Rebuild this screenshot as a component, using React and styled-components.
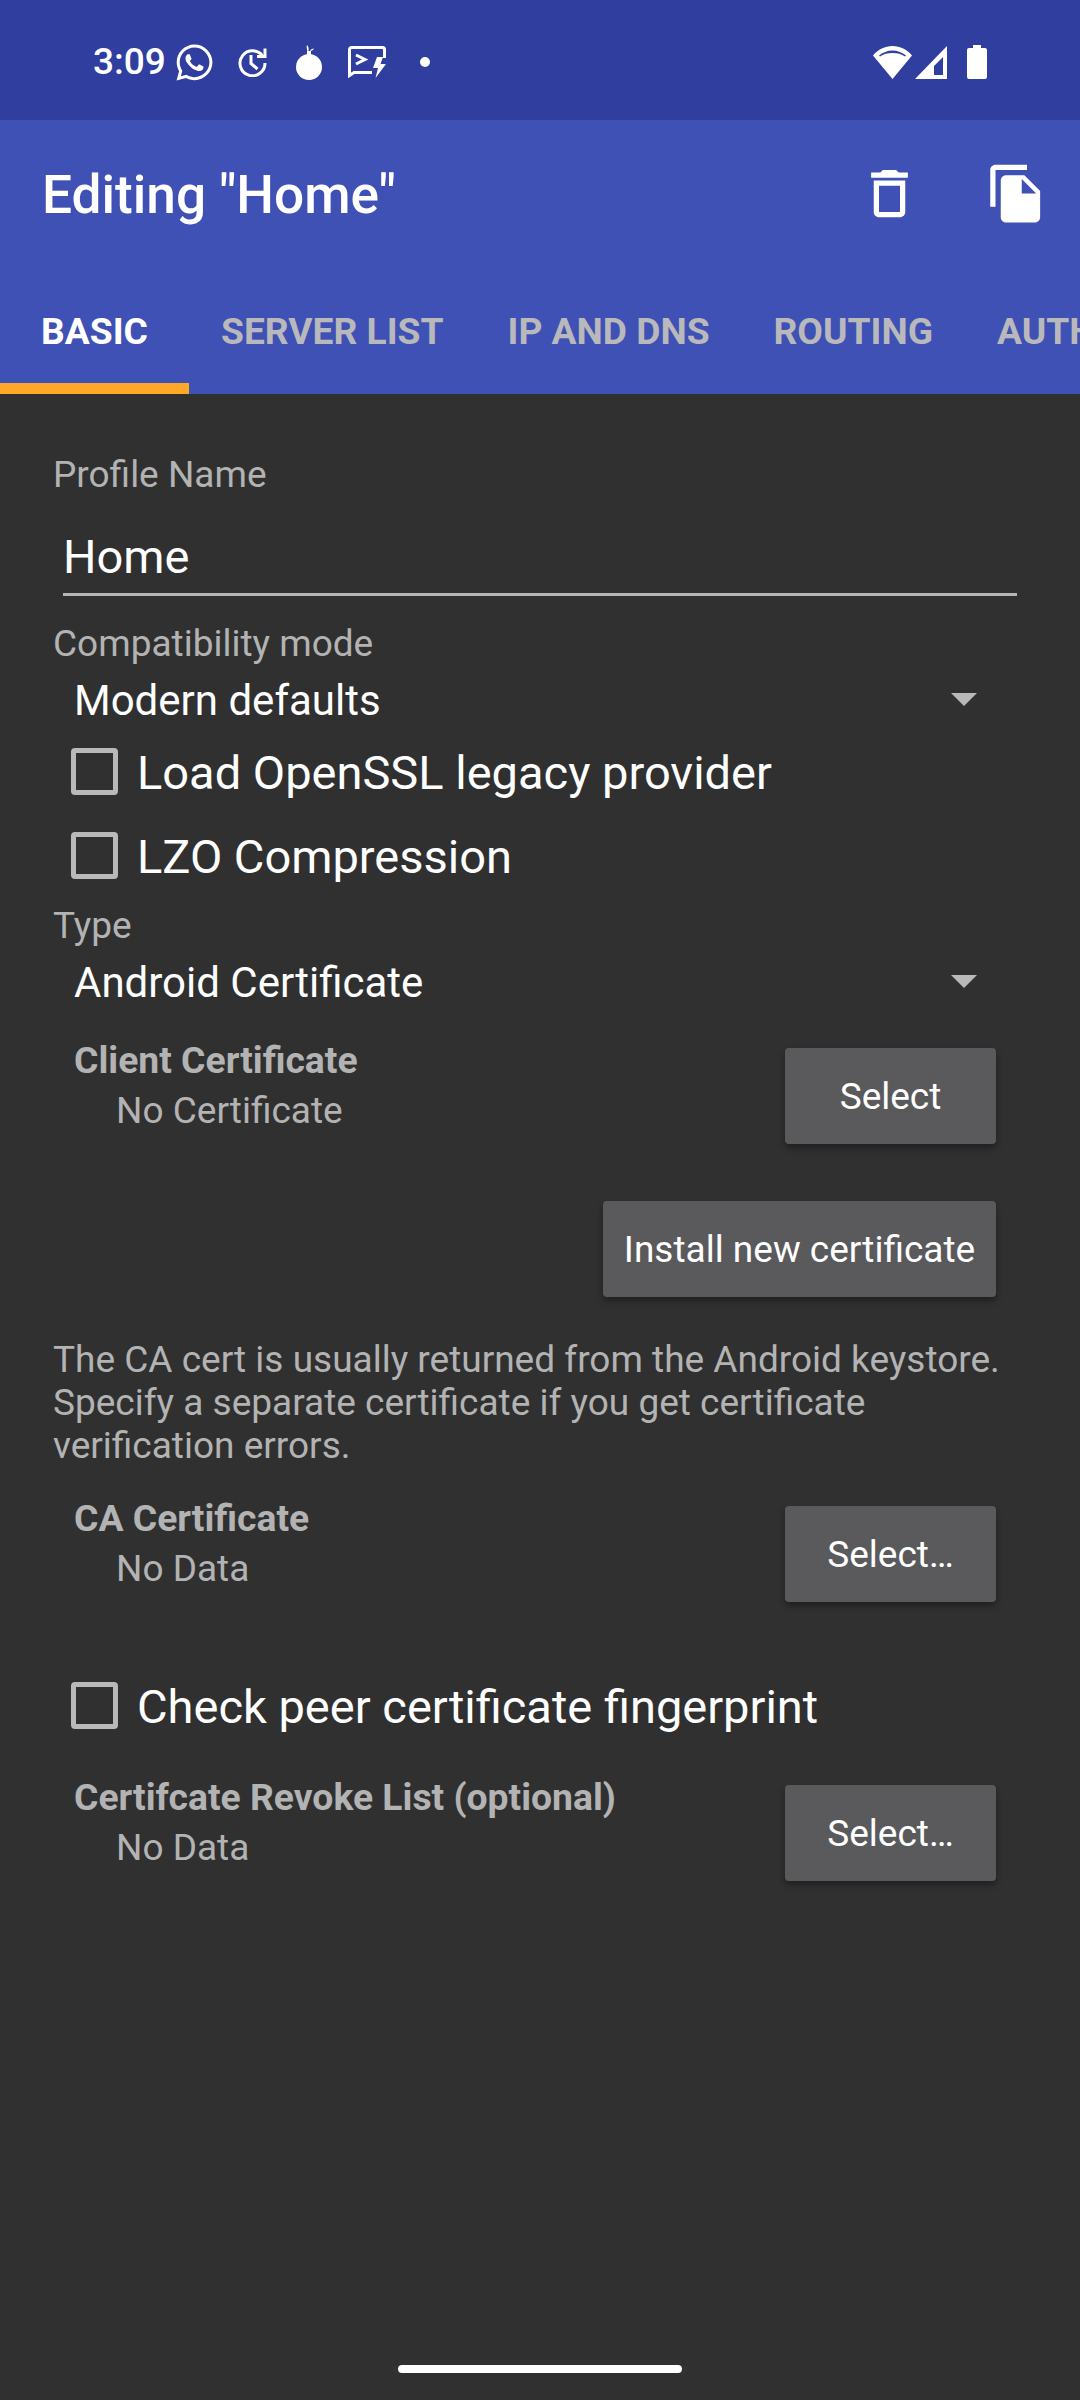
import React from 'react';
import styled, { createGlobalStyle } from 'styled-components';
import { FaWhatsapp } from 'react-icons/fa';

const GlobalStyle = createGlobalStyle`
  html, body {
    margin: 0;
    padding: 0;
    background: #303030;
  }
  * {
    box-sizing: border-box;
  }
`;

const Page = styled.div`
  width: 1080px;
  height: 2400px;
  overflow: hidden;
  display: flex;
  flex-direction: column;
  background: #303030;
  font-family: Roboto, "Liberation Sans", sans-serif;
  color: #fff;
  position: relative;
`;

const StatusBar = styled.div`
  height: 120px;
  flex: none;
  display: flex;
  align-items: center;
  padding: 4px 0 0 93px;
  background: #303f9f;
`;

const Clock = styled.span`
  font-size: 37px;
  font-weight: 500;
  width: 80.5px;
  margin-top: -2px;
`;

const StatusIcon = styled.svg`
  flex: none;
  margin-left: ${p => p.$ml || 0}px;
  fill: #fff;
`;

const Toolbar = styled.div`
  height: 147px;
  flex: none;
  display: flex;
  align-items: center;
  padding-left: 42px;
  background: #3f51b5;
`;

const Title = styled.div`
  font-size: 53.2px;
  font-weight: 500;
  flex: 1;
  padding-top: 2px;
`;

const ActionIcon = styled.svg`
  flex: none;
  width: 63px;
  height: 63px;
  fill: #fff;
  margin-right: ${p => p.$mr}px;
`;

const Tabs = styled.div`
  height: 127px;
  flex: none;
  display: flex;
  background: #3f51b5;
  overflow: hidden;
`;

const Tab = styled.div`
  flex: none;
  min-width: ${p => (p.$active ? '189px' : '0')};
  padding: 12px 32px 0;
  display: flex;
  align-items: center;
  justify-content: center;
  font-size: 37.2px;
  font-weight: 700;
  color: ${p => (p.$active ? '#fff' : '#b9b9bc')};
  border-bottom: 11px solid ${p => (p.$active ? '#ffa726' : 'transparent')};
`;

const Content = styled.div`
  flex: 1;
  padding: 0 63px 0 53px;
  display: flex;
  flex-direction: column;
`;

const Label = styled.div`
  font-size: 37px;
  line-height: 44px;
  color: #b3b3b3;
  margin-top: ${p => p.$mt || 0}px;
`;

const NameField = styled.div`
  margin: 30px 0 0 10px;
  height: 69px;
  font-size: 47px;
  line-height: 60px;
  border-bottom: 3px solid #b5b5b5;
`;

const Dropdown = styled.div`
  display: flex;
  align-items: center;
  justify-content: space-between;
  height: 56px;
  margin: 6px 21px 0 21px;
  padding-right: 19px;
  font-size: 42px;
`;

const Caret = styled.span`
  width: 0;
  height: 0;
  margin-top: -2px;
  border-left: 13px solid transparent;
  border-right: 13px solid transparent;
  border-top: 13px solid #b9b9b9;
`;

const CheckRow = styled.div`
  display: flex;
  align-items: center;
  height: 84px;
  margin-left: 18px;
  margin-top: ${p => p.$mt || 0}px;
  font-size: 47px;
`;

const Box = styled.span`
  flex: none;
  width: 47px;
  height: 47px;
  margin: -2px 19px 0 0;
  border: 5px solid #b9b9b9;
  border-radius: 4px;
`;

const CertRow = styled.div`
  display: flex;
  justify-content: space-between;
  align-items: flex-start;
  margin: ${p => p.$mt || 0}px 21px 0 0;
`;

const CertText = styled.div`
  margin-top: -10px;
  padding-left: 21px;
`;

const CertTitle = styled.div`
  font-size: 37.3px;
  line-height: 44px;
  font-weight: 700;
  color: #b3b3b3;
`;

const CertValue = styled.div`
  font-size: 37px;
  line-height: 44px;
  margin: 7px 0 0 42px;
  color: #b3b3b3;
`;

const ActionButton = styled.div`
  flex: none;
  width: ${p => p.$w}px;
  height: 96px;
  display: flex;
  align-items: center;
  justify-content: center;
  background: #5a5a5c;
  border-radius: 4px;
  box-shadow: 0 4px 6px rgba(0, 0, 0, 0.35);
  font-size: 37px;
`;

const InstallRow = styled.div`
  display: flex;
  justify-content: flex-end;
  margin: 57px 21px 0 0;
`;

const HelpText = styled.p`
  margin: 41px 0 0;
  font-size: 37px;
  line-height: 43px;
  color: #b3b3b3;
`;

const HomePill = styled.div`
  position: absolute;
  left: 398px;
  top: 2365px;
  width: 284px;
  height: 8px;
  border-radius: 4px;
  background: #fff;
`;

const tabs = ['BASIC', 'SERVER LIST', 'IP AND DNS', 'ROUTING', 'AUTHENTICATION'];

export default function App() {
  return (
    <Page>
      <GlobalStyle />
      <StatusBar>
        <Clock>3:09</Clock>
        <FaWhatsapp size={41} />
        <StatusIcon $ml={22.5} width="31" height="30" viewBox="0 0 31 30">
          <g fill="none" stroke="#fff" strokeWidth="3">
            <path d="M26 9.500A12.500 12.500 0 1 0 28 16" />
            <path d="M28 1.500V9.500H20" />
            <path d="M14 8V16.500L20.500 22" />
          </g>
        </StatusIcon>
        <StatusIcon $ml={28} width="26" height="35" viewBox="0 0 26 35">
          <circle cx="13" cy="22" r="13" />
          <rect x="11" y="6" width="4" height="5" />
          <path d="M11.500 6C10.500 3.500 10.500 1.500 11 0c1.500 1.500 2 3.500 1.500 6zM14 6c.5-1.500 2-2.500 4-2.500-.5 1.500-2 2.500-4 2.500z" />
        </StatusIcon>
        <StatusIcon $ml={26} width="38" height="32" viewBox="0 0 38 32">
          <g fill="none" stroke="#fff" strokeWidth="3">
            <path d="M24 26.500H6L1.500 29.500V3.500a2 2 0 0 1 2-2h31a2 2 0 0 1 2 2V12" />
            <path d="M8 9l9 4.500-9 4.500" />
          </g>
          <path d="M29 11h6l-2.500 7H38L27.500 32 30 22h-5z" />
        </StatusIcon>
        <StatusIcon $ml={34} width="10" height="10" viewBox="0 0 10 10">
          <circle cx="5" cy="5" r="5" />
        </StatusIcon>
        <StatusIcon $ml={443} width="39" height="33" viewBox="0 0 39 33">
          <path fillRule="evenodd" d="M19.500 33L0 9.500C5 3.500 12 0 19.500 0S34 3.500 39 9.500zM6 9.500c3.500-3 8.500-5 13.500-5s10 2 13.500 5l-1 1c-3.500-2.500-7.500-3.500-12.500-3.500S10.500 8 7 10.500z" />
        </StatusIcon>
        <StatusIcon $ml={3} width="32" height="33" viewBox="0 0 32 33">
          <path fillRule="evenodd" d="M32 0v33H0zM28 11L19 20v9h9z" />
        </StatusIcon>
        <StatusIcon $ml={20} width="20" height="34" viewBox="0 0 20 34">
          <path d="M6 0h8v3h4a2 2 0 0 1 2 2v27a2 2 0 0 1-2 2H2a2 2 0 0 1-2-2V5a2 2 0 0 1 2-2h4z" />
        </StatusIcon>
      </StatusBar>
      <Toolbar>
        <Title>Editing "Home"</Title>
        <ActionIcon $mr={64} viewBox="0 0 24 24">
          <path d="M6 19c0 1.100.9 2 2 2h8c1.100 0 2-.9 2-2V7H6v12zM8 9h8v10H8V9zm7.500-5l-1-1h-5l-1 1H5v2h14V4h-3.500z" />
        </ActionIcon>
        <ActionIcon $mr={32} viewBox="0 0 24 24">
          <path d="M16 1H4c-1.100 0-2 .9-2 2v14h2V3h12V1zm-1 4l6 6v10c0 1.100-.9 2-2 2H7.990C6.890 23 6 22.100 6 21l.01-14c0-1.100.89-2 1.990-2h7zm-1 7h5.500L14 6.500V12z" />
        </ActionIcon>
      </Toolbar>
      <Tabs>
        {tabs.map((name, i) => (
          <Tab key={name} $active={i === 0}>{name}</Tab>
        ))}
      </Tabs>
      <Content>
        <Label $mt={59}>Profile Name</Label>
        <NameField>Home</NameField>
        <Label $mt={26}>Compatibility mode</Label>
        <Dropdown>
          Modern defaults
          <Caret />
        </Dropdown>
        <CheckRow $mt={2}><Box />Load OpenSSL legacy provider</CheckRow>
        <CheckRow><Box />LZO Compression</CheckRow>
        <Label $mt={6}>Type</Label>
        <Dropdown>
          Android Certificate
          <Caret />
        </Dropdown>
        <CertRow $mt={38}>
          <CertText>
            <CertTitle>Client Certificate</CertTitle>
            <CertValue>No Certificate</CertValue>
          </CertText>
          <ActionButton $w={211}>Select</ActionButton>
        </CertRow>
        <InstallRow>
          <ActionButton $w={393}>Install new certificate</ActionButton>
        </InstallRow>
        <HelpText>
          The CA cert is usually returned from the Android keystore. Specify a separate certificate if you get certificate verification errors.
        </HelpText>
        <CertRow $mt={39}>
          <CertText>
            <CertTitle>CA Certificate</CertTitle>
            <CertValue>No Data</CertValue>
          </CertText>
          <ActionButton $w={211}>Select…</ActionButton>
        </CertRow>
        <CheckRow $mt={62}><Box />Check peer certificate fingerprint</CheckRow>
        <CertRow $mt={37}>
          <CertText>
            <CertTitle>Certifcate Revoke List (optional)</CertTitle>
            <CertValue>No Data</CertValue>
          </CertText>
          <ActionButton $w={211}>Select…</ActionButton>
        </CertRow>
      </Content>
      <HomePill />
    </Page>
  );
}
